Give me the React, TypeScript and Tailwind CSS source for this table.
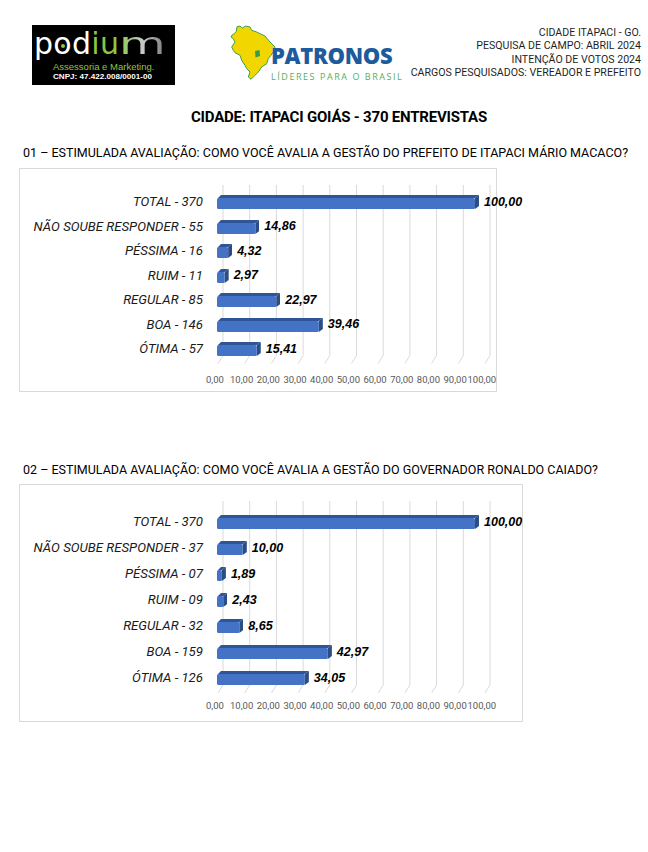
import React from 'react';

type Row = { label: string; value: number };

const SCALE = 2.58;
const GRID = 26.7;
const TICKS = ['0,00', '10,00', '20,00', '30,00', '40,00', '50,00', '60,00', '70,00', '80,00', '90,00', '100,00'];

const chart1: Row[] = [
    { label: 'TOTAL - 370', value: 100 },
    { label: 'NÃO SOUBE RESPONDER - 55', value: 14.86 },
    { label: 'PÉSSIMA - 16', value: 4.32 },
    { label: 'RUIM - 11', value: 2.97 },
    { label: 'REGULAR - 85', value: 22.97 },
    { label: 'BOA - 146', value: 39.46 },
    { label: 'ÓTIMA - 57', value: 15.41 },
];

const chart2: Row[] = [
    { label: 'TOTAL - 370', value: 100 },
    { label: 'NÃO SOUBE RESPONDER - 37', value: 10 },
    { label: 'PÉSSIMA - 07', value: 1.89 },
    { label: 'RUIM - 09', value: 2.43 },
    { label: 'REGULAR - 32', value: 8.65 },
    { label: 'BOA - 159', value: 42.97 },
    { label: 'ÓTIMA - 126', value: 34.05 },
];

const fmt = (v: number) => v.toFixed(2).replace('.', ',');

function Bar({ value }: { value: number }) {
    const w = value * SCALE;
    return (
        <svg width={w + 4} height={14} className="block shrink-0">
            <path d={`M1 3 L4 0 L${w + 4} 0 L${w} 3 Z`} fill="#2f5597" />
            <path d={`M${w} 3 L${w + 4} 0 L${w + 4} 11 L${w} 14 Z`} fill="#2c4c86" />
            <rect x={0} y={3} width={w} height={11} rx={1.5} fill="#4472c4" />
        </svg>
    );
}

function GridLines({ height, top }: { height: number; top: number }) {
    const total = height + top + 2;
    return (
        <svg width={300} height={total} className="absolute left-[196px]" style={{ top: -top }}>
            {TICKS.map((_, i) => {
                const x = 7 + i * GRID;
                return (
                    <path
                        key={i}
                        d={`M${x} 0 L${x} ${total - 8} L${x - 5} ${total}`}
                        stroke="#d9d9d9"
                        strokeWidth={1}
                        fill="none"
                    />
                );
            })}
        </svg>
    );
}

function Chart({
    rows,
    rowH,
    padTop,
    gridTop,
    axisGap,
    className,
}: {
    rows: Row[];
    rowH: number;
    padTop: number;
    gridTop: number;
    axisGap: number;
    className: string;
}) {
    return (
        <div className={`border border-[#d9d9d9] bg-white ${className}`}>
            <div className="relative" style={{ marginTop: padTop }}>
                <GridLines height={rows.length * rowH} top={gridTop} />
                {rows.map((r) => (
                    <div key={r.label} className="relative flex items-center" style={{ height: rowH }}>
                        <div className="w-[183px] shrink-0 text-right text-[13.2px] italic text-[#1a1a1a] font-['Roboto',sans-serif] whitespace-nowrap">
                            {r.label}
                        </div>
                        <div className="ml-[14px]">
                            <Bar value={r.value} />
                        </div>
                        <div className="ml-[5px] text-[12.5px] font-bold italic text-black font-['Liberation_Sans',Arial,sans-serif]">
                            {fmt(r.value)}
                        </div>
                    </div>
                ))}
            </div>
            <div className="ml-[181.6px] flex" style={{ marginTop: axisGap }}>
                {TICKS.map((t) => (
                    <div
                        key={t}
                        className="w-[26.7px] shrink-0 flex justify-center whitespace-nowrap text-[9.5px] leading-[14px] text-[#595959] font-['Roboto',sans-serif]"
                    >
                        {t}
                    </div>
                ))}
            </div>
        </div>
    );
}

function PodiumLogo() {
    return (
        <div className="w-[143px] h-[60px] bg-black flex flex-col">
            <div className="h-[34px] pl-[2px] flex items-end text-[30px] leading-[30px] text-white font-['DejaVu_Sans',sans-serif] tracking-[0.3px]">
                <span>p</span>
                <span className="relative">
                    o
                    <span className="absolute left-[7.3px] top-[15px] w-[4px] h-[4px] rounded-full bg-[#8dc63f]" />
                </span>
                <span>d</span>
                <span className="text-[#8dc63f]">iu</span>
                <span className="inline-block origin-left scale-x-[1.6] bg-gradient-to-r from-[#8dc63f] via-[#c8c8c8] to-[#777] bg-clip-text text-transparent">
                    m
                </span>
            </div>
            <div className="mt-[2px] pl-[21px] text-[9.5px] leading-[11px] text-[#8dc63f] font-['Liberation_Sans',Arial,sans-serif]">
                Assessoria e Marketing.
            </div>
            <div className="pl-[21px] text-[8.1px] leading-[10px] font-bold text-white font-['Liberation_Sans',Arial,sans-serif]">
                CNPJ: 47.422.008/0001-00
            </div>
        </div>
    );
}

function PatronosLogo() {
    return (
        <div className="flex items-start">
            <svg width={46} height={56} viewBox="5 3 46 56" className="block shrink-0">
                <path
                    d="M6.7 13.3 L9.3 11.7 L11.3 9.3 L12 4.7 L15 4 L17.3 6 L20.7 4 L25 5 L26.7 8.3 L31.7 10 L35 11.7 L40 14 L45 20 L50 25 L49.3 28.3 L46 33.3 L43.3 36.7 L41.7 41.7 L36.7 45 L33.3 50 L30 53.3 L26 57.3 L23.3 55 L25 50 L21.7 46.7 L20 43.3 L16.7 38.3 L15 33.3 L10 30.7 L8.3 28.3 L6.7 25 L10 20 L8.3 16.7 L6 15 Z"
                    fill="#f2d600"
                    stroke="#3aa14a"
                    strokeWidth={1}
                    strokeLinejoin="round"
                />
                <path d="M30 29 L34.5 28 L35 34 L30.5 35.5 Z" fill="#3a9a4a" />
            </svg>
            <div className="ml-[-5px] mt-[19px] flex flex-col items-start">
                <div className="text-[22px] leading-[22px] font-extrabold text-[#1d5b9c] font-['Open_Sans',sans-serif] tracking-[-0.3px]">
                    PATRONOS
                </div>
                <div className="mt-[6px] text-[9px] leading-[10px] text-[#5aae52] tracking-[1.55px] font-['Open_Sans',sans-serif]">
                    LÍDERES PARA O BRASIL
                </div>
            </div>
        </div>
    );
}

export default function App() {
    return (
        <div className="w-[648px] h-[852px] bg-white text-black font-['Roboto',sans-serif]">
            <div className="flex items-start pt-[25px]">
                <div className="ml-[32px]">
                    <PodiumLogo />
                </div>
                <div className="ml-[55px]">
                    <PatronosLogo />
                </div>
                <div className="flex-1 pr-[7px] pt-[1px] text-right text-[10.6px] leading-[13.4px] text-[#1f1f1f] uppercase">
                    <div>CIDADE ITAPACI - GO.</div>
                    <div>PESQUISA DE CAMPO: ABRIL 2024</div>
                    <div>INTENÇÃO DE VOTOS 2024</div>
                    <div className="whitespace-nowrap">CARGOS PESQUISADOS: VEREADOR E PREFEITO</div>
                </div>
            </div>

            <div className="mt-[22px] text-center text-[15px] leading-[20px] font-bold tracking-[-0.2px] pl-[30px]">
                CIDADE: ITAPACI GOIÁS - 370 ENTREVISTAS
            </div>

            <div className="mt-[18px] ml-[23px] text-[12.5px] leading-[16px] whitespace-nowrap">
                01 – ESTIMULADA AVALIAÇÃO: COMO VOCÊ AVALIA A GESTÃO DO PREFEITO DE ITAPACI MÁRIO MACACO?
            </div>

            <Chart
                rows={chart1}
                rowH={24.5}
                padTop={21}
                gridTop={5}
                axisGap={11}
                className="mt-[7px] ml-[19px] w-[478px] h-[224px]"
            />

            <div className="mt-[70px] ml-[23px] text-[12.5px] leading-[16px] whitespace-nowrap">
                02 – ESTIMULADA AVALIAÇÃO: COMO VOCÊ AVALIA A GESTÃO DO GOVERNADOR RONALDO CAIADO?
            </div>

            <Chart
                rows={chart2}
                rowH={26}
                padTop={24}
                gridTop={8}
                axisGap={8}
                className="mt-[6px] ml-[19px] w-[504px] h-[238px]"
            />
        </div>
    );
}
